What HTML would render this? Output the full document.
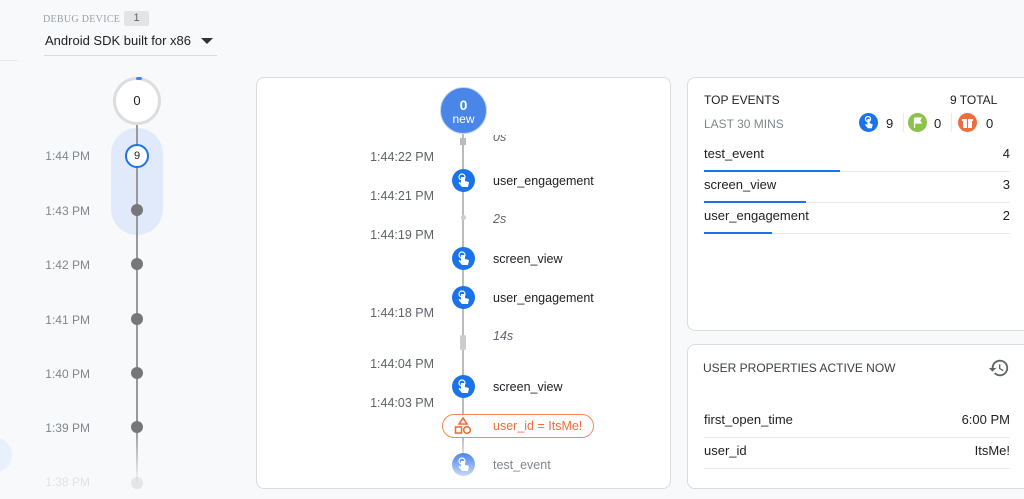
<!DOCTYPE html>
<html><head><style>
*{margin:0;padding:0;box-sizing:border-box}
body{width:1024px;height:499px;overflow:hidden;background:#f8f9fa;font-family:"Liberation Sans",Arial,sans-serif;position:relative;color:#202124}
.a{position:absolute}
.t{font-size:12px;color:#80868b;text-align:right;width:100px}
.dot{position:absolute;width:12px;height:12px;border-radius:50%;background:#777;left:131px}
.card{position:absolute;background:#fff;border:1px solid #dadce0;border-radius:8px}
.ic{position:absolute;width:23px;height:23px;border-radius:50%;background:#1a73e8;left:452px}
.ic svg{position:absolute;left:5px;top:4px}
.ev{position:absolute;left:493px;font-size:12.5px;color:#202124}
.ts{position:absolute;font-size:12.5px;color:#5f6368;right:590px}
.row{position:absolute;left:704px;width:306px;font-size:13px;border-bottom:1px solid #e8eaed;height:31px;line-height:26px}
.row span{float:right}
.bar{position:absolute;bottom:-1px;left:0;height:2px;background:#1a73e8}
</style></head><body>
<div class="a" style="left:43px;top:14px;font-family:'Liberation Serif',serif;font-size:10px;color:#9aa0a6;letter-spacing:.3px">DEBUG DEVICE</div>
<div class="a" style="left:124px;top:11px;width:25px;height:15px;background:#e3e4e6;border-radius:2px;font-size:11px;color:#5f6368;text-align:center;line-height:15px">1</div>
<div class="a" style="left:45px;top:33px;font-size:13px;color:#202124">Android SDK built for x86</div>
<div class="a" style="left:201px;top:38px;width:0;height:0;border-left:6px solid transparent;border-right:6px solid transparent;border-top:6px solid #333"></div>
<div class="a" style="left:44px;top:55px;width:173px;height:1px;background:#dadce0"></div>
<div class="a" style="left:0;top:60px;width:18px;height:1px;background:#e8eaed"></div>

<!-- left timeline -->
<div class="a" style="left:136px;top:124px;width:1.5px;height:360px;background:linear-gradient(#999 85%,rgba(153,153,153,0))"></div>
<div class="a" style="left:111px;top:128px;width:52px;height:107px;border-radius:26px;background:#e1eafb"></div>
<div class="a" style="left:136px;top:124px;width:1.5px;height:111px;background:#999"></div>
<div class="a" style="left:113px;top:77px;width:48px;height:48px;border-radius:50%;border:3px solid #ddd;background:#fff;font-size:13px;text-align:center;line-height:42px">0</div>
<div class="a" style="left:136px;top:77px;width:6px;height:3px;background:#4285f4;border-radius:2px"></div>
<div class="a" style="left:125px;top:144px;width:24px;height:24px;border-radius:50%;border:2px solid #1a73e8;background:#fff;font-size:11px;text-align:center;line-height:20px">9</div>
<div class="a t" style="left:-10px;top:149px">1:44 PM</div>
<div class="a t" style="left:-10px;top:204px">1:43 PM</div>
<div class="a t" style="left:-10px;top:258px">1:42 PM</div>
<div class="a t" style="left:-10px;top:313px">1:41 PM</div>
<div class="a t" style="left:-10px;top:367px">1:40 PM</div>
<div class="a t" style="left:-10px;top:421px">1:39 PM</div>
<div class="a t" style="left:-10px;top:475px;opacity:.2">1:38 PM</div>
<div class="dot" style="top:204px"></div>
<div class="dot" style="top:258px"></div>
<div class="dot" style="top:313px"></div>
<div class="dot" style="top:367px"></div>
<div class="dot" style="top:421px"></div>
<div class="dot" style="top:477px;opacity:.15"></div>
<div class="a" style="left:-20px;top:438px;width:32px;height:34px;border-radius:50%;background:#e8f0fe"></div>

<!-- middle card -->
<div class="card" style="left:256px;top:77px;width:415px;height:412px"></div>
<div class="a" style="left:462px;top:130px;width:1.5px;height:340px;background:linear-gradient(#bbb 90%,rgba(187,187,187,0))"></div>
<div class="a" style="left:460px;top:138px;width:6px;height:7px;background:#bbb"></div>
<div class="a" style="left:460px;top:335px;width:6px;height:15px;background:#ccc;border-radius:2px"></div>
<div class="a" style="left:461px;top:215px;width:5px;height:5px;border-radius:50%;background:#ccc"></div>
<div class="a" style="left:440px;top:87px;width:47px;height:47px;border-radius:50%;background:#4a86e8;border:1px solid #c5d7f5;color:#fff;text-align:center"><div style="font-size:14px;font-weight:bold;margin-top:9px">0</div><div style="font-size:12px;margin-top:-1px">new</div></div>
<div class="a" style="left:493px;top:135px;font-size:12.5px;font-style:italic;color:#5f6368;height:9px;overflow:hidden;line-height:4px">0s</div>
<div class="ts" style="top:150px">1:44:22 PM</div>
<div class="ts" style="top:189px">1:44:21 PM</div>
<div class="ts" style="top:228px">1:44:19 PM</div>
<div class="ts" style="top:306px">1:44:18 PM</div>
<div class="ts" style="top:357px">1:44:04 PM</div>
<div class="ts" style="top:396px">1:44:03 PM</div>
<div class="a" style="left:493px;top:212px;font-size:12.5px;font-style:italic;color:#5f6368">2s</div>
<div class="a" style="left:493px;top:329px;font-size:12.5px;font-style:italic;color:#5f6368">14s</div>

<div class="ic" style="top:169px"><svg width="13" height="15" viewBox="0 0 13 15"><circle cx="5" cy="4" r="3" fill="none" stroke="#fff" stroke-width="1.2"/><path d="M4 4v6l-1.5-1.2-1 1L5 14h6l1-5-4-1V4z" fill="#fff"/></svg></div>
<div class="ev" style="top:174px">user_engagement</div>
<div class="ic" style="top:247px"><svg width="13" height="15" viewBox="0 0 13 15"><circle cx="5" cy="4" r="3" fill="none" stroke="#fff" stroke-width="1.2"/><path d="M4 4v6l-1.5-1.2-1 1L5 14h6l1-5-4-1V4z" fill="#fff"/></svg></div>
<div class="ev" style="top:252px">screen_view</div>
<div class="ic" style="top:286px"><svg width="13" height="15" viewBox="0 0 13 15"><circle cx="5" cy="4" r="3" fill="none" stroke="#fff" stroke-width="1.2"/><path d="M4 4v6l-1.5-1.2-1 1L5 14h6l1-5-4-1V4z" fill="#fff"/></svg></div>
<div class="ev" style="top:291px">user_engagement</div>
<div class="ic" style="top:375px"><svg width="13" height="15" viewBox="0 0 13 15"><circle cx="5" cy="4" r="3" fill="none" stroke="#fff" stroke-width="1.2"/><path d="M4 4v6l-1.5-1.2-1 1L5 14h6l1-5-4-1V4z" fill="#fff"/></svg></div>
<div class="ev" style="top:380px">screen_view</div>
<div class="a" style="left:442px;top:414px;width:152px;height:24px;border:1.5px solid #f08a5d;border-radius:12px;background:#fff"></div>
<svg class="a" style="left:453px;top:416px" width="20" height="20" viewBox="0 0 20 20"><path d="M10 2l4 6H6z" fill="none" stroke="#ee6e3b" stroke-width="1.6"/><rect x="2.5" y="11" width="6" height="6" fill="none" stroke="#ee6e3b" stroke-width="1.6"/><circle cx="14" cy="14" r="3.3" fill="none" stroke="#ee6e3b" stroke-width="1.6"/></svg>
<div class="ev" style="top:419px;color:#ee6e3b">user_id = ItsMe!</div>
<div class="ic" style="top:453px;background:linear-gradient(#4a86e8,#c6d8f8)"><svg width="13" height="15" viewBox="0 0 13 15"><circle cx="5" cy="4" r="3" fill="none" stroke="#fff" stroke-width="1.2"/><path d="M4 4v6l-1.5-1.2-1 1L5 14h6l1-5-4-1V4z" fill="#fff"/></svg></div>
<div class="ev" style="top:458px;color:#80868b">test_event</div>

<!-- right top card -->
<div class="card" style="left:687px;top:77px;width:345px;height:254px"></div>
<div class="a" style="left:704px;top:93px;font-size:12px;color:#202124">TOP EVENTS</div>
<div class="a" style="left:950px;top:93px;font-size:12px;color:#202124">9 TOTAL</div>
<div class="a" style="left:704px;top:117px;font-size:12px;color:#80868b">LAST 30 MINS</div>
<div class="a" style="left:859px;top:113px;width:19px;height:19px;border-radius:50%;background:#1a73e8"><svg width="19" height="19" viewBox="0 0 19 19"><circle cx="9" cy="6" r="2.5" fill="none" stroke="#fff" stroke-width="1.3"/><path d="M8.4 6v6l-1.5-1-1 .8 3 3.5h4l.8-4-3-1V6z" fill="#fff"/></svg></div>
<div class="a" style="left:886px;top:116px;font-size:13px">9</div>
<div class="a" style="left:903px;top:113px;width:1px;height:19px;background:#e8eaed"></div>
<div class="a" style="left:908px;top:113px;width:19px;height:19px;border-radius:50%;background:#8bc34a"><svg width="19" height="19" viewBox="0 0 19 19"><path d="M6.5 5v10M6.5 5h6.5l-1.5 2.5 1.5 2.5H6.5" fill="#fff" stroke="#fff" stroke-width="1.3"/></svg></div>
<div class="a" style="left:934px;top:116px;font-size:13px">0</div>
<div class="a" style="left:951px;top:113px;width:1px;height:19px;background:#e8eaed"></div>
<div class="a" style="left:958px;top:113px;width:19px;height:19px;border-radius:50%;background:#ee6e3b"><svg width="19" height="19" viewBox="0 0 19 19"><rect x="5" y="8" width="9" height="7" fill="#fff"/><rect x="4" y="6" width="11" height="2" fill="#fff"/><path d="M9.5 6V15" stroke="#ee6e3b" stroke-width="1.2"/></svg></div>
<div class="a" style="left:986px;top:116px;font-size:13px">0</div>
<div class="row" style="top:141px">test_event<span>4</span><div class="bar" style="width:136px"></div></div>
<div class="row" style="top:172px">screen_view<span>3</span><div class="bar" style="width:102px"></div></div>
<div class="row" style="top:203px">user_engagement<span>2</span><div class="bar" style="width:68px"></div></div>

<!-- right bottom card -->
<div class="card" style="left:687px;top:344px;width:345px;height:145px"></div>
<div class="a" style="left:703px;top:361px;font-size:12px;color:#3c4043">USER PROPERTIES ACTIVE NOW</div>
<svg class="a" style="left:988px;top:357px" width="22" height="22" viewBox="0 0 24 24"><path d="M13 3a9 9 0 0 0-9 9H1l3.9 3.9L9 12H6a7 7 0 1 1 2.05 4.95l-1.42 1.42A9 9 0 1 0 13 3zm-1 5v5l4.28 2.54.72-1.21-3.5-2.08V8z" fill="#5f6368"/></svg>
<div class="row" style="top:407px;left:704px">first_open_time<span>6:00 PM</span></div>
<div class="row" style="top:438px;left:704px">user_id<span>ItsMe!</span></div>
</body></html>
